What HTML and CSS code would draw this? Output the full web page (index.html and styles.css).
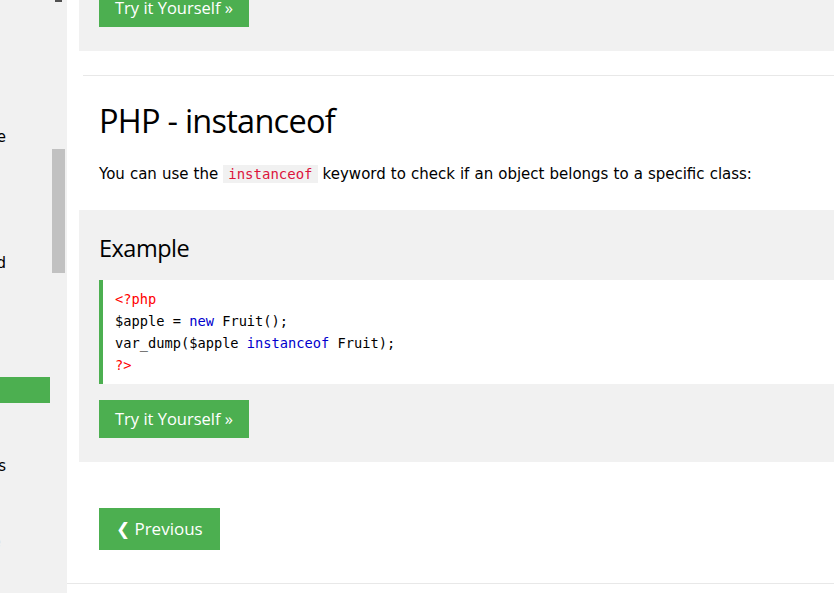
FILE: index.html
```html
<!DOCTYPE html>
<html lang="en">
<head>
<meta charset="utf-8">
<title>PHP instanceof</title>
<link rel="stylesheet" href="styles.css">
</head>
<body>
<div class="page">
  <aside class="sidebar">
    <nav class="nav">
      <a class="nav-item"><span>PHP Namespace</span></a>
      <a class="nav-item short"><span>PHP Iterables</span></a>
      <a class="nav-item short"><span>PHP MySQL</span></a>
      <a class="nav-item short"><span>PHP Database</span></a>
      <a class="nav-item short"><span>PHP XML</span></a>
      <a class="nav-item"><span>PHP Classes Advanced</span></a>
      <a class="nav-item short"><span>PHP AJAX</span></a>
      <a class="nav-item short"><span>PHP Examples</span></a>
      <a class="nav-item short"><span>PHP Compiler</span></a>
      <a class="nav-item short"><span>PHP Quiz</span></a>
      <a class="nav-item short active"><span>PHP Keywords</span></a>
      <a class="nav-item short"><span>PHP Exercises</span></a>
      <a class="nav-item short"><span>PHP Server</span></a>
      <a class="nav-item"><span>PHP Syllabus and Certificates</span></a>
      <a class="nav-item short"><span>PHP Study Plan</span></a>
      <a class="nav-item short"><span>PHP Bootcamp</span></a>
      <a class="nav-item faint"><span>PHP Certificate</span></a>
    </nav>
    <div class="scrolltrack">
      <div class="scroll-arrow"></div>
      <div class="scroll-thumb"></div>
    </div>
  </aside>
  <main class="main">
    <div class="example first">
      <a class="btn btn-try">Try it Yourself &raquo;</a>
    </div>
    <hr class="rule">
    <h2 class="title">PHP - instanceof</h2>
    <p class="intro">You can use the <code class="codespan">instanceof</code> keyword to check if an object belongs to a specific class:</p>
    <div class="example">
      <h3 class="example-title">Example</h3>
      <div class="code"><span class="c-tag">&lt;?php</span><br>$apple = <span class="c-kw">new</span> Fruit();<br>var_dump($apple <span class="c-kw">instanceof</span> Fruit);<br><span class="c-tag">?&gt;</span></div>
      <a class="btn btn-try">Try it Yourself &raquo;</a>
    </div>
    <div class="pager">
      <a class="btn btn-prev">&#10094; Previous</a>
    </div>
    <hr class="rule bottom">
  </main>
</div>
</body>
</html>
```
FILE: styles.css
```css
html, body {
  margin: 0;
  padding: 0;
  background: #fff;
  overflow: hidden;
}
body {
  font-family: "DejaVu Sans", Verdana, sans-serif;
  font-size: 15px;
  color: #000;
}
.page {
  display: flex;
  width: 834px;
  height: 593px;
  overflow: hidden;
}
.sidebar {
  width: 67px;
  flex: 0 0 67px;
  background: #f1f1f1;
  display: flex;
}
.nav {
  width: 50px;
  flex: 0 0 50px;
  overflow: hidden;
  padding-top: 124.35px;
  display: flex;
  flex-direction: column;
}
.nav-item {
  height: 25.3px;
  flex: 0 0 25.3px;
  display: flex;
  align-items: center;
  justify-content: flex-end;
  white-space: nowrap;
  padding-right: 44px;
  color: #000;
  font-size: 15px;
}
.nav-item.short span {
  margin-right: 60px;
}
.nav-item.active {
  background: #4caf50;
  color: #fff;
}
.nav-item.faint {
  color: #d8d8d8;
  padding-right: 49px;
}
.scrolltrack {
  flex: 1;
  display: flex;
  flex-direction: column;
}
.scroll-arrow {
  width: 7px;
  height: 2px;
  margin-left: 5px;
  background: #505050;
}
.scroll-thumb {
  width: 13px;
  height: 124px;
  margin: 147px 0 0 2px;
  background: #c1c1c1;
}
.main {
  flex: 1;
  min-width: 0;
  padding-left: 32px;
  background: #fff;
}
.example {
  background: #f1f1f1;
  margin: 0 -20px 0 -20px;
  padding: 0 20px 24px 20px;
  display: flow-root;
}
.example.first .btn {
  margin-top: -11px;
}
.btn {
  display: inline-block;
  background: #4caf50;
  color: #fff;
  font-family: "Open Sans", "Noto Sans", sans-serif;
  white-space: nowrap;
}
.btn-try {
  height: 38px;
  line-height: 38px;
  padding: 0 16px;
  font-size: 16.5px;
}
.rule {
  border: 0;
  border-top: 1px solid #e8e8e8;
  height: 0;
  margin: 24px 0 0 -16px;
}
.title {
  font-family: "Open Sans", "Noto Sans", sans-serif;
  font-weight: 400;
  font-size: 32.5px;
  letter-spacing: -0.75px;
  line-height: 40px;
  margin: 25px 0 21px 0;
}
.intro {
  line-height: 24px;
  margin: 0 0 24px 0;
  word-spacing: 0.3px;
}
.codespan {
  font-family: "DejaVu Sans Mono", monospace;
  font-size: 14px;
  color: crimson;
  background: #f1f1f1;
  padding: 1px 5px;
  word-spacing: 0;
}
.example-title {
  font-family: "Open Sans", "Noto Sans", sans-serif;
  font-weight: 400;
  font-size: 23.5px;
  letter-spacing: -0.5px;
  line-height: 32px;
  margin: 0;
  padding-top: 22px;
}
.code {
  margin: 16px 0 16px 0;
  background: #fff;
  border-left: 4px solid #4caf50;
  padding: 8px 12px;
  font-family: "DejaVu Sans Mono", monospace;
  font-size: 13.7px;
  line-height: 22px;
  color: #000;
  white-space: nowrap;
}
.c-tag {
  color: red;
}
.c-kw {
  color: mediumblue;
}
.pager {
  margin-top: 46px;
}
.btn-prev {
  height: 42px;
  line-height: 42px;
  padding: 0 17px;
  font-size: 17px;
}
.rule.bottom {
  margin: 33px 0 0 -32px;
}
```
